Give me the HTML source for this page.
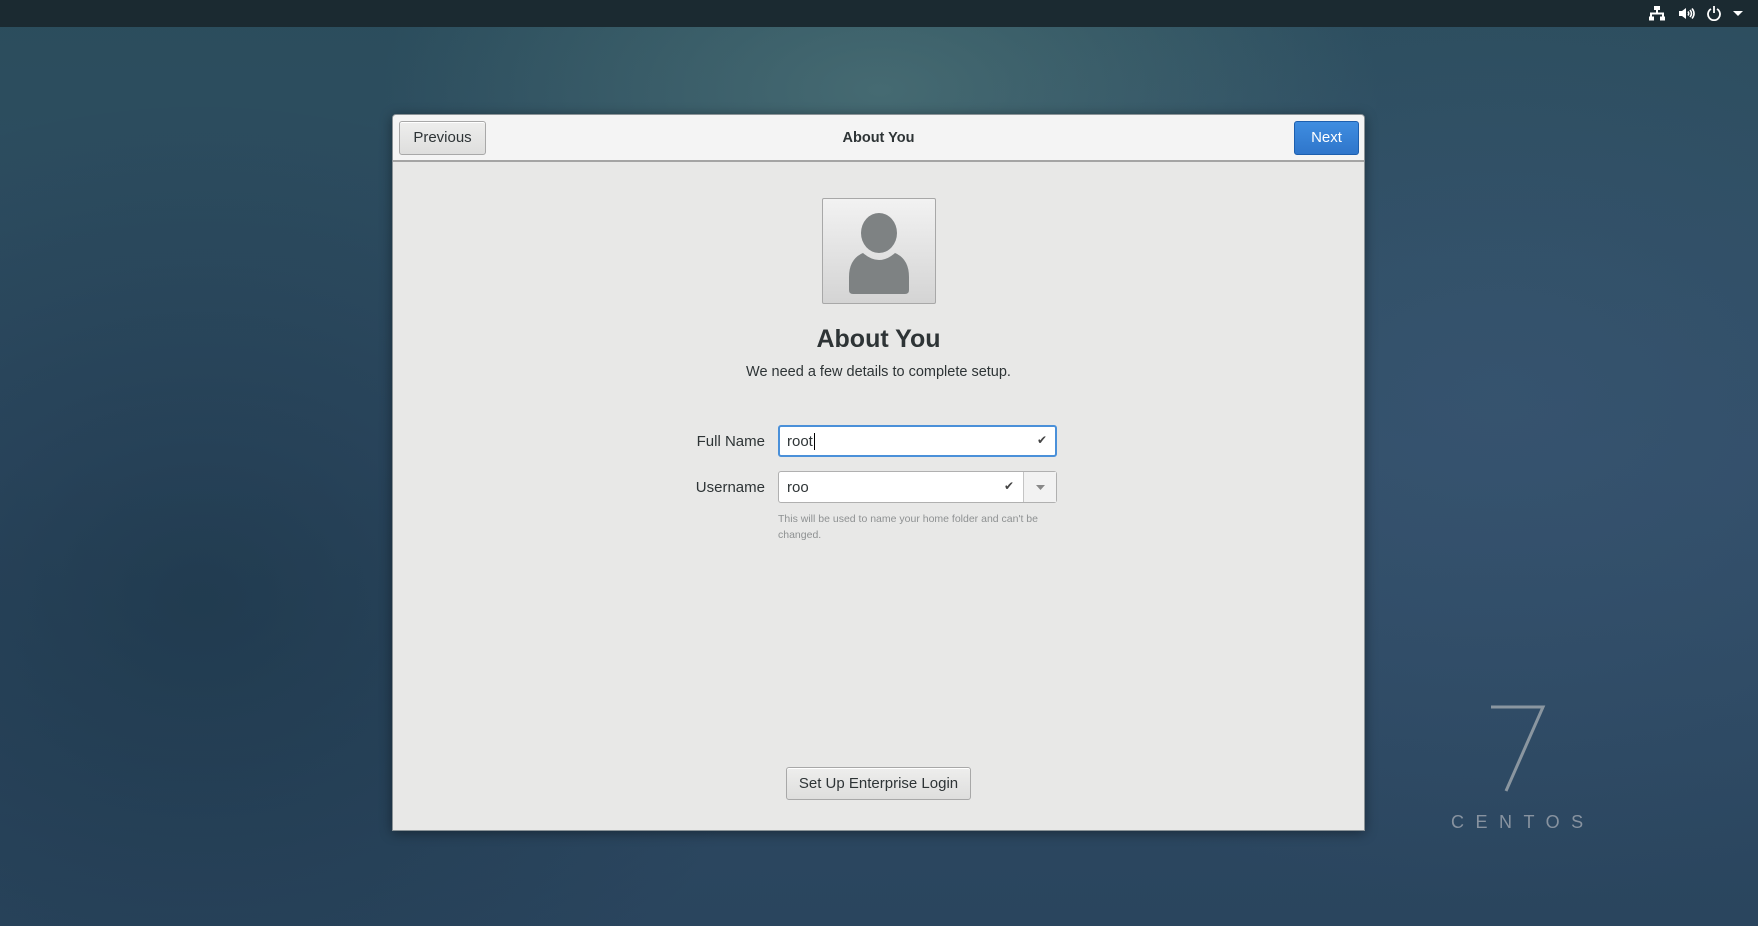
<!DOCTYPE html>
<html><head><meta charset="utf-8"><style>
*{margin:0;padding:0;box-sizing:border-box}
body{width:1758px;height:926px;overflow:hidden;font-family:"Liberation Sans",sans-serif;position:relative;
background:
radial-gradient(ellipse 500px 260px at 880px 90px,rgba(90,130,130,.55),transparent),
radial-gradient(ellipse 700px 500px at 1500px 400px,rgba(60,90,120,.5),transparent),
radial-gradient(ellipse 600px 500px at 200px 600px,rgba(20,45,60,.5),transparent),
linear-gradient(180deg,#2b4d5c 0%,#304c66 50%,#2a455e 100%);}
.top{position:absolute;left:0;top:0;width:1758px;height:27px;background:#1b2a31;}
.dlg{position:absolute;left:392px;top:114px;width:973px;height:717px;background:#e8e8e7;border:1px solid #8b9397;box-shadow:0 2px 12px rgba(0,0,0,.4);border-radius:4px 4px 0 0;overflow:hidden}
.hdr{height:47px;background:#f4f4f4;border-bottom:2px solid #a4a4a4;position:relative}
.btn{position:absolute;border:1px solid #a8a8a8;border-radius:3px;background:linear-gradient(#eeeeed,#dededd);font-size:15px;color:#2e3436;text-align:center;box-shadow:inset 0 1px #fff}
.c{position:absolute;left:0;width:100%;text-align:center;color:#2e3436}
.lbl{position:absolute;font-size:15px;color:#2e3436;text-align:right;width:100px}
.ent{position:absolute;left:385px;width:279px;height:32px;background:#fff;border:1px solid #b0b0b0;border-radius:3px;font-size:15px;padding:7px 8px;color:#2e3436}
</style></head><body>
<div class="top">
<svg style="position:absolute;left:1649px;top:6px" width="16" height="15" viewBox="0 0 16 15" fill="#fff"><rect x="5" y="0" width="6" height="4"/><rect x="7" y="4" width="2" height="3"/><rect x="1" y="6.5" width="14" height="2"/><rect x="1" y="8" width="2" height="3"/><rect x="13" y="8" width="2" height="3"/><rect x="0" y="10.5" width="5" height="4"/><rect x="11" y="10.5" width="5" height="4"/></svg>
<svg style="position:absolute;left:1678px;top:6px" width="17" height="15" viewBox="0 0 17 15" fill="none" stroke="#fff" stroke-width="1.6"><path d="M1 5h3l4-3v11l-4-3H1z" fill="#fff" stroke="none"/><path d="M10 5.5q1.5 2 0 4M12 4q3 3.5 0 7M14 2.5q4 5 0 10"/></svg>
<svg style="position:absolute;left:1706px;top:5px" width="16" height="16" viewBox="0 0 16 16" fill="none" stroke="#fff" stroke-width="1.8"><path d="M5 4a6 6 0 1 0 6 0"/><path d="M8 1v7"/></svg>
<svg style="position:absolute;left:1733px;top:11px" width="10" height="6" viewBox="0 0 10 6" fill="#fff"><path d="M0 0h10L5 5z"/></svg>
</div>
<div class="dlg">
<div class="hdr">
<div class="btn" style="left:6px;top:6px;width:87px;height:34px;line-height:32px">Previous</div>
<div class="c" style="top:15px;font-size:14.5px;font-weight:bold">About You</div>
<div class="btn" style="left:901px;top:6px;width:65px;height:34px;line-height:32px;background:linear-gradient(#3f8de0,#2f76cb);border-color:#1d5fae;color:#fff;box-shadow:none">Next</div>
</div>
<div style="position:absolute;left:429px;top:83px;width:114px;height:106px;border:1px solid #a8a8a8;border-radius:2px;background:linear-gradient(#f2f2f2,#d4d4d4)">
<svg width="112" height="104" viewBox="0 0 112 104"><ellipse cx="56" cy="34" rx="18" ry="20" fill="#7e8283"/><path d="M40 54q16 14 32 0q14 6 14 24v13q0 4-4 4H30q-4 0-4-4V78q0-18 14-24z" fill="#7e8283"/></svg></div>
<div class="c" style="top:210px;font-size:25px;font-weight:bold">About You</div>
<div class="c" style="top:249px;font-size:14.5px">We need a few details to complete setup.</div>
<div class="lbl" style="left:272px;top:318px">Full Name</div>
<div class="ent" style="top:310px;border:2px solid #4a90d9;padding:6px 7px">root<span style="border-left:1px solid #000;margin-left:1px"></span><span style="position:absolute;right:8px;top:6px;color:#444;font-size:12px">✔</span></div>
<div class="lbl" style="left:272px;top:364px">Username</div>
<div class="ent" style="top:356px">roo<span style="position:absolute;right:42px;top:7px;color:#444;font-size:12px">✔</span><div style="position:absolute;right:0;top:0;width:33px;height:30px;border-left:1px solid #c4c4c4;background:#f2f2f2"><svg style="position:absolute;left:12px;top:13px" width="9" height="5"><path d="M0 0h9L4.5 5z" fill="#888"/></svg></div></div>
<div style="position:absolute;left:385px;top:396px;width:272px;font-size:10.5px;line-height:16px;color:#8e9192">This will be used to name your home folder and can't be changed.</div>
<div class="btn" style="left:393px;top:652px;width:185px;height:33px;line-height:31px">Set Up Enterprise Login</div>
</div>
<svg style="position:absolute;left:1488px;top:705px" width="60" height="88" viewBox="0 0 60 88" fill="none" stroke="#8a96a0" stroke-width="3"><path d="M3 2h52L18 86"/></svg>
<div style="position:absolute;left:1451px;top:812px;font-size:18px;letter-spacing:11.5px;color:#8893a0">CENTOS</div>
</body></html>
